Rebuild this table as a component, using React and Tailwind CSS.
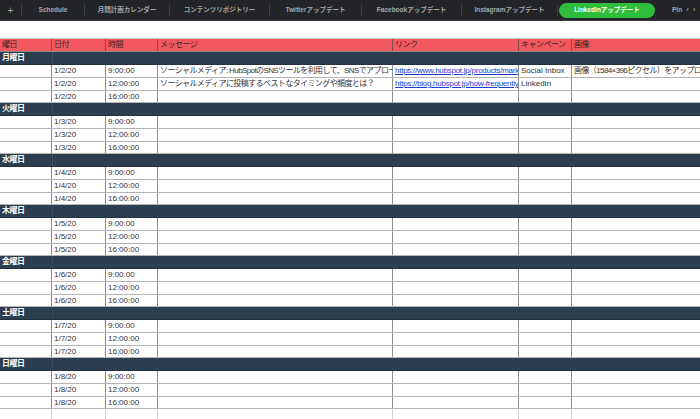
import React from "react";

const font = { fontFamily: '"Liberation Sans", Arial, "Noto Sans CJK JP", sans-serif' };

const cols = "grid grid-cols-[52px_54px_52px_235px_126px_53px_1fr]";

const tabs = [
  { label: "+", w: "w-[22px]" },
  { label: "Schedule", w: "w-[63px]" },
  { label: "月間計画カレンダー", w: "w-[85px]" },
  { label: "コンテンツリポジトリー", w: "w-[100px]" },
  { label: "Twitterアップデート", w: "w-[92px]" },
  { label: "Facebookアップデート", w: "w-[100px]" },
  { label: "Instagramアップデート", w: "w-[96px]" },
];

const days = [
  { name: "月曜日", date: "1/2/20" },
  { name: "火曜日", date: "1/3/20" },
  { name: "水曜日", date: "1/4/20" },
  { name: "木曜日", date: "1/5/20" },
  { name: "金曜日", date: "1/6/20" },
  { name: "土曜日", date: "1/7/20" },
  { name: "日曜日", date: "1/8/20" },
];

const times = ["9:00:00", "12:00:00", "16:00:00"];
const heights = ["h-[13px]", "h-[13px]", "h-[12px]"];

function Cell({ children, className = "" }) {
  return (
    <div
      className={
        "border-r border-[#8c8c8c] px-[2px] overflow-hidden whitespace-nowrap flex items-center text-[8px] text-[#333] leading-none " +
        className
      }
    >
      {children}
    </div>
  );
}

function DataRow({ date, time, h, extra }) {
  return (
    <div className={cols + " " + h + " border-b border-[#b4b4b4] bg-white"}>
      <Cell />
      <Cell>{date}</Cell>
      <Cell>{time}</Cell>
      <Cell className="tracking-[-0.6px]">{extra?.msg}</Cell>
      <Cell className="text-[7.4px] tracking-[-0.25px]">
        {extra?.link && (
          <span className="text-[#1a3dd6] underline">{extra.link}</span>
        )}
      </Cell>
      <Cell>{extra?.camp}</Cell>
      <Cell className="border-r-0 tracking-[-0.6px]">{extra?.img}</Cell>
    </div>
  );
}

const mondayExtras = [
  {
    msg: "ソーシャルメディア: HubSpotのSNSツールを利用して、SNSでアプローチする方法",
    link: "https://www.hubspot.jp/products/marketing/social-inbox",
    camp: "Social Inbox",
    img: "画像（1584×396ピクセル）をアップロード",
  },
  {
    msg: "ソーシャルメディアに投稿するベストなタイミングや頻度とは？",
    link: "https://blog.hubspot.jp/how-frequently-post-social-media",
    camp: "LinkedIn",
  },
  {},
];

export default function App() {
  return (
    <div className="w-[700px] h-[419px] overflow-hidden bg-white" style={font}>
      {/* Top bar */}
      <div className="h-[21px] bg-[#222427] border-b border-[#3a3d42] flex items-center">
        {tabs.map((t, i) => (
          <div
            key={i}
            className={
              t.w +
              " h-[12px] flex items-center justify-center border-r border-[#3c3f44] text-[#a8a8a8] font-bold " +
              (t.label === "+" ? "text-[10px] font-normal" : "text-[6.5px]")
            }
          >
            {t.label}
          </div>
        ))}
        <div className="ml-[1px] w-[96px] h-[15px] rounded-full bg-[#2fbd3c] flex items-center justify-center text-white font-bold text-[6.5px]">
          LinkedInアップデート
        </div>
        <div className="ml-[17px] flex items-center gap-[4px] text-[#a8a8a8] font-bold text-[6.5px]">
          <span>Pin</span>
          <span className="text-[8px] font-normal">‹</span>
          <span className="text-[8px] font-normal">›</span>
        </div>
      </div>

      {/* white gap */}
      <div className="h-[18px] bg-white border-b border-[#c8c8c8]" />

      {/* header */}
      <div className={cols + " h-[13px] bg-[#f3585f] border-b border-[#8c8c8c]"}>
        {["曜日", "日付", "時間", "メッセージ", "リンク", "キャンペーン", "画像"].map((h, i) => (
          <div
            key={i}
            className={
              "px-[2px] flex items-center text-[8px] text-[#3a2222] leading-none whitespace-nowrap overflow-hidden tracking-[-0.5px] " +
              (i < 6 ? "border-r border-[#8a4a4c]" : "")
            }
          >
            {h}
          </div>
        ))}
      </div>

      {days.map((d, di) => (
        <div key={di}>
          <div className={cols + " h-[13px] bg-[#2c3e50] border-b border-[#23303d]"}>
            <div className="px-[2px] flex items-center text-[8px] font-bold text-white leading-none whitespace-nowrap tracking-[-0.5px]">
              {d.name}
            </div>
            <div className="border-l border-[#3a4b5c]" />
            <div />
            <div />
            <div />
            <div />
            <div />
          </div>
          {times.map((t, ti) => (
            <DataRow
              key={ti}
              date={d.date}
              time={t}
              h={heights[ti]}
              extra={di === 0 ? mondayExtras[ti] : undefined}
            />
          ))}
        </div>
      ))}
      <div className={cols + " h-[13px] border-b border-[#dddddd] bg-white opacity-40"}>
        <Cell />
        <Cell />
        <Cell />
        <Cell />
        <Cell />
        <Cell />
        <Cell className="border-r-0" />
      </div>
    </div>
  );
}
